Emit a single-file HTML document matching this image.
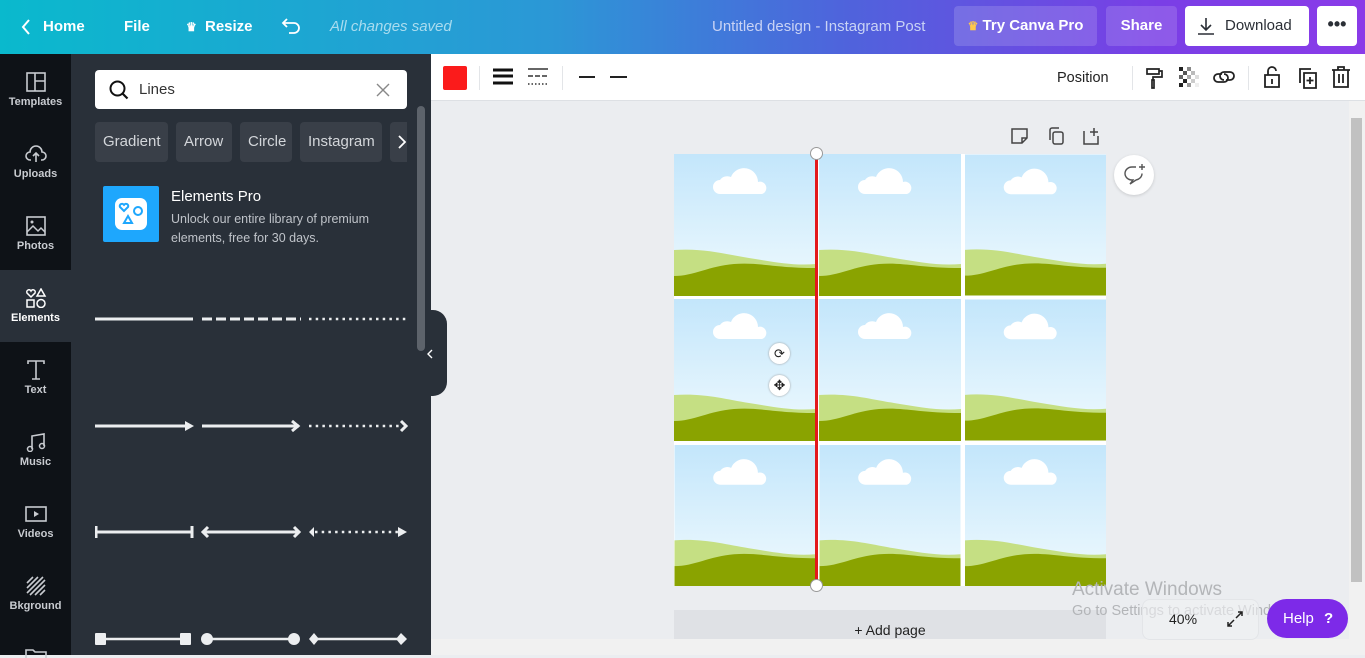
<!DOCTYPE html>
<html><head><meta charset="utf-8">
<style>
*{box-sizing:border-box;margin:0;padding:0}
body{width:1365px;height:655px;overflow:hidden;font-family:"Liberation Sans",sans-serif;background:#ebedf0;position:relative}
.top{position:absolute;left:0;top:0;width:1365px;height:54px;background:linear-gradient(90deg,#0ab9cd 0%,#2b98d6 40%,#4f63dc 62%,#7a3ee6 85%,#8a3be8 100%);color:#fff;font-size:15px;font-weight:bold}
.top span{position:absolute;top:18px}
.btn{position:absolute;top:6px;height:40px;border-radius:4px;font-size:15px;font-weight:bold;line-height:40px;text-align:center}
.rail{position:absolute;left:0;top:54px;width:71px;height:601px;background:#0e1217}
.rail .it{position:absolute;left:0;width:71px;height:72px;text-align:center;color:#c8cbd0;font-size:11px;font-weight:bold}
.rail .it svg{display:block;margin:18px auto 4px}
.panel{position:absolute;left:71px;top:54px;width:360px;height:601px;background:#293039}
.chip{position:absolute;top:68px;height:40px;background:#393f48;border-radius:4px;color:#d3d6da;font-size:15px;line-height:40px;padding:0 8px}
.tb{position:absolute;left:431px;top:54px;width:934px;height:47px;background:#fff;border-bottom:1px solid #dde0e4}
</style></head><body>
<div class="top">
<svg style="position:absolute;left:20px;top:18px" width="12" height="18"><path d="M9 2L3 9l6 7" stroke="#fff" stroke-width="2" fill="none"/></svg>
<span style="left:43px">Home</span><span style="left:124px">File</span>
<span style="left:186px;font-size:12px;top:20px">♛</span><span style="left:205px">Resize</span>
<svg style="position:absolute;left:281px;top:16px" width="22" height="20"><path d="M6 3L2 7l4 4M2 7h11a5 5 0 010 10H8" stroke="#fff" stroke-width="1.8" fill="none"/></svg>
<span style="left:330px;font-weight:normal;font-style:italic;color:#a9dcef">All changes saved</span>
<span style="left:712px;color:#c9d3f5;font-weight:normal">Untitled design - Instagram Post</span>
<div class="btn" style="left:954px;width:143px;background:rgba(255,255,255,.15)"><span style="position:static;color:#ffc94a;font-size:12px">♛</span> Try Canva Pro</div>
<div class="btn" style="left:1106px;width:71px;background:rgba(255,255,255,.15)">Share</div>
<div class="btn" style="left:1185px;width:124px;background:#fff;color:#2b2f36;font-weight:normal;text-align:left;padding-left:40px">Download
<svg style="position:absolute;left:12px;top:11px" width="18" height="18"><path d="M9 1v12M4 8l5 5 5-5M1 17h16" stroke="#2b2f36" stroke-width="1.6" fill="none"/></svg></div>
<div class="btn" style="left:1317px;width:40px;background:#fff;color:#2b2f36;font-size:18px;line-height:36px">•••</div>
</div>

<div class="rail">
<div class="it" style="top:0"><svg width="20" height="20"><rect x="1" y="1" width="18" height="18" fill="none" stroke="#c8cbd0" stroke-width="1.6"/><path d="M9 1v18M9 9h10" stroke="#c8cbd0" stroke-width="1.6"/></svg>Templates</div>
<div class="it" style="top:72px"><svg width="22" height="20"><path d="M6 16H5a4 4 0 010-8 6 6 0 0112 0 4 4 0 010 8h-1M11 18V9M8 12l3-3 3 3" stroke="#c8cbd0" stroke-width="1.6" fill="none"/></svg>Uploads</div>
<div class="it" style="top:144px"><svg width="20" height="20"><rect x="1" y="1" width="18" height="18" fill="none" stroke="#c8cbd0" stroke-width="1.6"/><path d="M1 16l6-6 5 5 3-3 4 4" stroke="#c8cbd0" stroke-width="1.5" fill="none"/><circle cx="6" cy="6" r="1.5" fill="#c8cbd0"/></svg>Photos</div>
<div class="it" style="top:216px;background:#293039;color:#fff"><svg width="22" height="20"><path d="M6 9L2 5a2 2 0 014-2 2 2 0 014 2z" stroke="#fff" stroke-width="1.5" fill="none"/><path d="M16 1l4 7h-8z" stroke="#fff" stroke-width="1.5" fill="none"/><rect x="2" y="12" width="7" height="7" stroke="#fff" stroke-width="1.5" fill="none"/><circle cx="16" cy="15.5" r="4" stroke="#fff" stroke-width="1.5" fill="none"/></svg>Elements</div>
<div class="it" style="top:288px"><svg width="20" height="20"><path d="M2 4V1h16v3M10 1v18M6 19h8" stroke="#c8cbd0" stroke-width="1.6" fill="none"/></svg>Text</div>
<div class="it" style="top:360px"><svg width="20" height="20"><path d="M6 17V4l12-2v12" stroke="#c8cbd0" stroke-width="1.6" fill="none"/><circle cx="4" cy="17" r="2.5" stroke="#c8cbd0" stroke-width="1.5" fill="none"/><circle cx="16" cy="14" r="2.5" stroke="#c8cbd0" stroke-width="1.5" fill="none"/></svg>Music</div>
<div class="it" style="top:432px"><svg width="22" height="20"><rect x="1" y="3" width="20" height="14" fill="none" stroke="#c8cbd0" stroke-width="1.6"/><path d="M9 7l5 3-5 3z" fill="#c8cbd0"/></svg>Videos</div>
<div class="it" style="top:504px"><svg width="20" height="20"><path d="M1 7L7 1M1 12L12 1M1 17L17 1M4 19L19 4M9 19L19 9M14 19l5-5" stroke="#c8cbd0" stroke-width="1.6"/></svg>Bkground</div>
<svg style="position:absolute;left:25px;top:594px" width="22" height="10"><path d="M1 10V2h7l2 2h11v6" stroke="#c8cbd0" stroke-width="1.6" fill="none"/></svg>
</div>

<div class="panel">
<div style="position:absolute;left:24px;top:16px;width:312px;height:39px;background:#fff;border-radius:4px">
<svg style="position:absolute;left:14px;top:10px" width="22" height="22"><circle cx="8.5" cy="8.5" r="7" stroke="#111" stroke-width="2" fill="none"/><path d="M13.5 13.5l5 5" stroke="#111" stroke-width="2.2"/></svg>
<span style="position:absolute;left:44px;top:11px;font-size:15px;color:#333">Lines</span>
<svg style="position:absolute;left:281px;top:13px" width="14" height="14"><path d="M1 1l12 12M13 1L1 13" stroke="#888" stroke-width="1.4"/></svg></div>
<div class="chip" style="left:24px;width:73px">Gradient</div>
<div class="chip" style="left:105px;width:56px">Arrow</div>
<div class="chip" style="left:169px;width:52px">Circle</div>
<div class="chip" style="left:229px;width:82px">Instagram</div>
<div class="chip" style="left:319px;width:17px;padding:0;border-radius:4px 0 0 4px"><svg style="position:absolute;left:8px;top:13px" width="8" height="14"><path d="M1 1l6 6-6 6" stroke="#fff" stroke-width="1.8" fill="none"/></svg></div>
<div style="position:absolute;left:32px;top:132px;width:56px;height:56px;background:#1ea7fd;border-radius:2px">
<div style="position:absolute;left:12px;top:12px;width:32px;height:32px;background:#fff;border-radius:7px"></div>
<svg style="position:absolute;left:12px;top:12px" width="32" height="32"><path d="M9 13l-4-4a2.2 2.2 0 013.8-2.2L9 7l.2-.2A2.2 2.2 0 0113 9z" stroke="#1ea7fd" stroke-width="2" fill="none"/><circle cx="23" cy="13" r="4" stroke="#1ea7fd" stroke-width="2" fill="none"/><path d="M13 18l4 7H9z" stroke="#1ea7fd" stroke-width="2" fill="none"/></svg></div>
<div style="position:absolute;left:100px;top:134px;color:#fff;font-size:15px">Elements Pro</div>
<div style="position:absolute;left:100px;top:156px;color:#bfc3c9;font-size:12.5px;line-height:19px">Unlock our entire library of premium<br>elements, free for 30 days.</div>
<div style="position:absolute;left:346px;top:52px;width:8px;height:245px;background:#5d636b;border-radius:4px"></div>
<svg style="position:absolute;left:24px;top:250px" width="320" height="350" fill="#eceef0" stroke="#eceef0">
<path d="M0 15H98" stroke-width="3"/>
<path d="M107 15H206" stroke-width="3" stroke-dasharray="10 4"/>
<path d="M214 15H312" stroke-width="2.5" stroke-dasharray="2.5 4.2"/>
<path d="M0 122H90" stroke-width="3"/><path d="M90 117l9 5-9 5z" stroke="none"/>
<path d="M107 122H204M197 117l6 5-6 5" stroke-width="3" fill="none"/>
<path d="M214 122H305" stroke-width="2.5" stroke-dasharray="2.5 4.2"/><path d="M306 117l5 5-5 5" stroke-width="3" fill="none"/>
<path d="M2 228H96M1 222v12M97 222v12" stroke-width="3"/>
<path d="M108 228H204M113 223l-5 5 5 5M199 223l5 5-5 5" stroke-width="3" fill="none"/>
<path d="M220 228H305" stroke-width="2.5" stroke-dasharray="2.5 4.2"/><path d="M219 223l-5 5 5 5z M303 223l9 5-9 5z" stroke="none"/>
<path d="M5 335H90" stroke-width="2.5"/><rect x="0" y="329" width="11" height="12" stroke="none" rx="1"/><rect x="85" y="329" width="11" height="12" stroke="none" rx="1"/>
<path d="M112 335H195" stroke-width="2.5"/><circle cx="112" cy="335" r="6" stroke="none"/><circle cx="199" cy="335" r="6" stroke="none"/>
<path d="M219 335H305" stroke-width="2.5"/><path d="M214 335l5-6 5 6-5 6zM301 335l5-6 6 6-6 6z" stroke="none"/>
</svg>
</div>
<div style="position:absolute;left:425px;top:310px;width:22px;height:86px;background:#293039;border-radius:0 14px 14px 0"></div>
<svg style="position:absolute;left:427px;top:349px" width="6" height="10"><path d="M5 1L1 5l4 4" stroke="#fff" stroke-width="1.4" fill="none"/></svg>

<div class="tb">
<div style="position:absolute;left:12px;top:12px;width:24px;height:24px;background:#fb1b1b;border-radius:2px"></div>
<div style="position:absolute;left:48px;top:12px;width:1px;height:24px;background:#e3e5e8"></div>
<svg style="position:absolute;left:62px;top:14px" width="20" height="18"><path d="M0 2h20M0 8h20M0 15h20" stroke="#111" stroke-width="3"/></svg>
<svg style="position:absolute;left:97px;top:14px" width="20" height="18"><path d="M0 1h20" stroke="#333" stroke-width="1.5"/><path d="M0 8h20" stroke="#333" stroke-width="1.5" stroke-dasharray="5 2"/><path d="M0 16h20" stroke="#333" stroke-width="1.5" stroke-dasharray="1.5 2"/></svg>
<div style="position:absolute;left:131px;top:12px;width:1px;height:24px;background:#e3e5e8"></div>
<svg style="position:absolute;left:146px;top:19px" width="60" height="8"><path d="M2 4h16M33 4h17" stroke="#222" stroke-width="2"/></svg>
<span style="position:absolute;left:626px;top:16px;font-size:14.5px;color:#222">Position</span>
<div style="position:absolute;left:701px;top:12px;width:1px;height:24px;background:#e3e5e8"></div>
<svg style="position:absolute;left:714px;top:12px" width="20" height="24"><path d="M2 3h12v5H2zM14 5h3v6H8v3M7 14h2v8H7z" stroke="#222" stroke-width="1.7" fill="none"/></svg>
<svg style="position:absolute;left:748px;top:13px" width="20" height="20" fill="#222"><rect x="0" y="0" width="4" height="4"/><rect x="8" y="0" width="4" height="4" fill="#888"/><rect x="4" y="4" width="4" height="4" fill="#555"/><rect x="12" y="4" width="4" height="4" fill="#bbb"/><rect x="0" y="8" width="4" height="4" fill="#666"/><rect x="8" y="8" width="4" height="4" fill="#aaa"/><rect x="16" y="8" width="4" height="4" fill="#ddd"/><rect x="4" y="12" width="4" height="4"/><rect x="12" y="12" width="4" height="4" fill="#ccc"/><rect x="0" y="16" width="4" height="4"/><rect x="8" y="16" width="4" height="4" fill="#999"/><rect x="16" y="16" width="4" height="4" fill="#eee"/></svg>
<svg style="position:absolute;left:782px;top:15px" width="22" height="16"><path d="M9 5H5a4 4 0 000 8h6a4 4 0 000-8M13 11h4a4 4 0 000-8h-6a4 4 0 000 8" stroke="#222" stroke-width="1.8" fill="none"/></svg>
<div style="position:absolute;left:817px;top:12px;width:1px;height:24px;background:#e3e5e8"></div>
<svg style="position:absolute;left:832px;top:11px" width="18" height="24"><path d="M5 10V6a4 4 0 018 0M2 10h14v12H2zM9 14v5" stroke="#222" stroke-width="1.8" fill="none"/></svg>
<svg style="position:absolute;left:866px;top:13px" width="20" height="22"><path d="M3 16V2h11M7 6h12v15H7zM13 10v7M9.5 13.5h7" stroke="#222" stroke-width="1.8" fill="none"/></svg>
<svg style="position:absolute;left:900px;top:12px" width="20" height="22"><path d="M1 4h18M7 4V1h6v3M3 4v17h14V4M8 8v9M12 8v9" stroke="#222" stroke-width="1.8" fill="none"/></svg>
</div>

<div style="position:absolute;left:1349px;top:101px;width:16px;height:554px;background:#f1f1f1"></div>
<div style="position:absolute;left:1351px;top:118px;width:11px;height:464px;background:#c1c1c1"></div>
<div style="position:absolute;left:431px;top:639px;width:918px;height:16px;background:#f1f1f1"></div>

<svg width="0" height="0" style="position:absolute"><defs>
<linearGradient id="sky" x1="0" y1="0" x2="0" y2="1"><stop offset="0" stop-color="#c3e6fb"/><stop offset="1" stop-color="#f0fafe"/></linearGradient>
<symbol id="tile" viewBox="0 0 142 142">
<rect width="142" height="142" fill="url(#sky)"/>
<path d="M46 40a7 7 0 010-14 9 9 0 0111-3 14 14 0 0127 5 6 6 0 014 12z" fill="#fff"/>
<path d="M0 96C30 94 50 100 75 104S120 112 142 110V142H0z" fill="#c5df83"/>
<path d="M0 122C20 122 35 112 60 110S100 114 142 114V142H0z" fill="#8aa300"/>
</symbol></defs></svg>
<div style="position:absolute;left:674px;top:154px;width:432px;height:432px;background:#fff"></div>
<svg style="position:absolute;left:674px;top:154px" width="142" height="142"><use href="#tile"/></svg>
<svg style="position:absolute;left:819px;top:154px" width="142" height="142"><use href="#tile"/></svg>
<svg style="position:absolute;left:965px;top:154px" width="141" height="142"><use href="#tile"/></svg>
<svg style="position:absolute;left:674px;top:299px" width="142" height="142"><use href="#tile"/></svg>
<svg style="position:absolute;left:819px;top:299px" width="142" height="142"><use href="#tile"/></svg>
<svg style="position:absolute;left:965px;top:299px" width="141" height="142"><use href="#tile"/></svg>
<svg style="position:absolute;left:674px;top:445px" width="142" height="141"><use href="#tile"/></svg>
<svg style="position:absolute;left:819px;top:445px" width="142" height="141"><use href="#tile"/></svg>
<svg style="position:absolute;left:965px;top:445px" width="141" height="141"><use href="#tile"/></svg>
<div style="position:absolute;left:815px;top:154px;width:3px;height:432px;background:#e3191c"></div>
<div style="position:absolute;left:810px;top:147px;width:13px;height:13px;border-radius:50%;background:#fff;border:1px solid #999"></div>
<div style="position:absolute;left:810px;top:579px;width:13px;height:13px;border-radius:50%;background:#fff;border:1px solid #999"></div>
<div style="position:absolute;left:769px;top:343px;width:21px;height:21px;border-radius:50%;background:#fff;box-shadow:0 0 2px #999;font-size:13px;text-align:center;line-height:21px;color:#222">⟳</div>
<div style="position:absolute;left:769px;top:375px;width:21px;height:21px;border-radius:50%;background:#fff;box-shadow:0 0 2px #999;font-size:14px;text-align:center;line-height:21px;color:#222">✥</div>
<svg style="position:absolute;left:1011px;top:127px" width="100" height="18" fill="none" stroke="#444" stroke-width="1.5"><path d="M1 2h15v9l-5 5H1zM11 16v-5h5"/><rect x="42" y="5" width="10" height="12" rx="2"/><path d="M39 13V3a2 2 0 012-2h7"/><path d="M73 4v13h14V9M83 1v8M79 5h8"/></svg>
<div style="position:absolute;left:1114px;top:155px;width:40px;height:40px;border-radius:50%;background:#fff;box-shadow:0 1px 3px rgba(0,0,0,.15)"></div>
<svg style="position:absolute;left:1123px;top:164px" width="24" height="22" fill="none" stroke="#555" stroke-width="1.4"><path d="M13 3H9C5 3 2 6 2 9.5S5 16 9 16h1l-3 4 6-4c3-.5 6-3 6-6.5"/><path d="M19 0v6M16 3h6"/></svg>
<div style="position:absolute;left:674px;top:610px;width:432px;height:29px;background:#dfe1e5;font-size:14px;color:#222;text-align:center;line-height:40px;overflow:hidden">+ Add page</div>
<div style="position:absolute;left:1072px;top:579px;font-size:19px;color:#b3b5b8">Activate Windows</div>
<div style="position:absolute;left:1072px;top:603px;font-size:14.5px;color:#b3b5b8">Go to Settings to activate Windows.</div>
<div style="position:absolute;left:1142px;top:599px;width:117px;height:41px;border:1px solid #e3e5e8;border-radius:8px;background:rgba(240,241,243,.6)"></div>
<span style="position:absolute;left:1169px;top:611px;font-size:14px;color:#222">40%</span>
<svg style="position:absolute;left:1227px;top:611px" width="16" height="16" stroke="#222" stroke-width="1.5" fill="none"><path d="M9 7l6-6M11 1h4v4M7 9l-6 6M1 11v4h4"/></svg>
<div style="position:absolute;left:1267px;top:599px;width:81px;height:39px;border-radius:20px;background:#7d2ae8;color:#fff;font-size:15px;line-height:39px;padding-left:16px">Help <b style="margin-left:6px">?</b></div>
</body></html>
